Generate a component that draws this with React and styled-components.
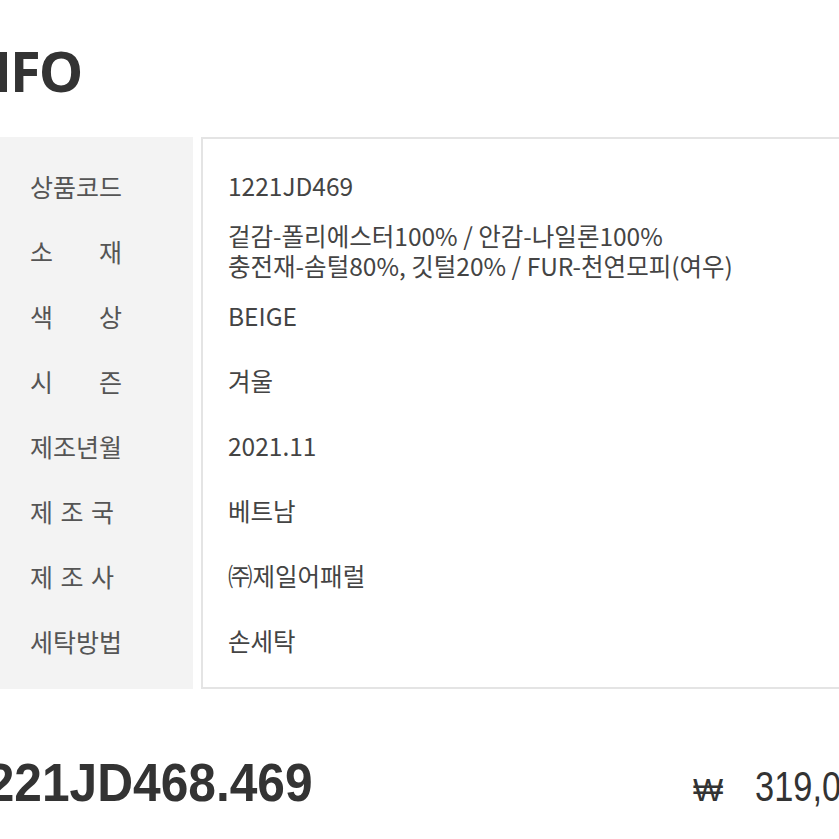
import styled, { createGlobalStyle } from 'styled-components';

const GlobalStyle = createGlobalStyle`
    html, body {
        margin: 0;
        padding: 0;
        background: #ffffff;
    }
    body {
        font-family: "Noto Sans CJK KR", "Noto Sans", sans-serif;
        color: #444;
    }
`;

const rows = [
    { label: ['상품코드'], value: ['1221JD469'] },
    { label: ['소', '재'], value: ['겉감-폴리에스터100% / 안감-나일론100%', '충전재-솜털80%, 깃털20% / FUR-천연모피(여우)'] },
    { label: ['색', '상'], value: ['BEIGE'] },
    { label: ['시', '즌'], value: ['겨울'] },
    { label: ['제조년월'], value: ['2021.11'] },
    { label: ['제', '조', '국'], value: ['베트남'], narrow: true },
    { label: ['제', '조', '사'], value: ['㈜제일어패럴'], narrow: true },
    { label: ['세탁방법'], value: ['손세탁'] },
];

const App = () => (
    <Page>
        <GlobalStyle />
        <Title>INFO</Title>
        <Table>
            <LabelCol>
                {rows.map((row) => (
                    <Row key={row.label.join('')}>
                        <Label $spread={row.label.length > 1} $narrow={row.narrow}>
                            {row.label.map((ch) => (
                                <span key={ch}>{ch}</span>
                            ))}
                        </Label>
                    </Row>
                ))}
            </LabelCol>
            <ValueCol>
                {rows.map((row) => (
                    <Row key={row.label.join('')}>
                        <Value>
                            {row.value.map((line) => (
                                <div key={line}>{line}</div>
                            ))}
                        </Value>
                    </Row>
                ))}
            </ValueCol>
        </Table>
        <Footer>
            <Code>1221JD468.469</Code>
            <Price>
                <Won>₩</Won>
                <Amount>319,000</Amount>
            </Price>
        </Footer>
    </Page>
);

const Page = styled.div`
    width: 839px;
    height: 839px;
    overflow: hidden;
`;
const Title = styled.h1`
    margin: 0;
    padding-top: 36px;
    margin-left: -50px;
    font-family: "Open Sans", "Liberation Sans", sans-serif;
    font-weight: 700;
    font-size: 56px;
    line-height: 68px;
    color: #333;
    letter-spacing: -2px;
`;
const Table = styled.div`
    display: flex;
    column-gap: 8px;
    margin-top: 33px;
    height: 552px;
`;
const LabelCol = styled.div`
    flex: 0 0 193px;
    box-sizing: border-box;
    background: #f3f3f3;
    padding: 16px 0 16px 30px;
`;
const ValueCol = styled.div`
    flex: 1;
    margin-right: -20px;
    box-sizing: border-box;
    border: 2px solid #e4e4e4;
    padding: 14px 0 14px 25px;
`;
const Row = styled.div`
    height: 65px;
    display: flex;
    align-items: center;
`;
const Label = styled.div`
    display: flex;
    justify-content: ${({ $spread }) => ($spread ? 'space-between' : 'flex-start')};
    width: ${({ $narrow }) => ($narrow ? '84px' : '92px')};
    font-size: 25px;
    line-height: 30px;
    color: #555;
    white-space: nowrap;
`;
const Value = styled.div`
    font-size: 24.5px;
    line-height: 30px;
    color: #444;
    white-space: nowrap;
`;
const Footer = styled.div`
    display: flex;
    align-items: baseline;
    justify-content: space-between;
    margin-top: 62px;
`;
const Code = styled.div`
    margin-left: -41px;
    font-family: "Liberation Sans", "Helvetica", sans-serif;
    font-weight: 700;
    font-size: 54px;
    line-height: 62px;
    color: #333;
    white-space: nowrap;
    transform: scaleX(0.92);
    transform-origin: left center;
`;
const Price = styled.div`
    flex: 0 0 146px;
    min-width: 0;
    display: flex;
    align-items: baseline;
    font-family: "Liberation Sans", "Helvetica", sans-serif;
    color: #333;
    white-space: nowrap;
`;
const Won = styled.span`
    flex: 0 0 62px;
    font-size: 32px;
`;
const Amount = styled.span`
    display: inline-block;
    font-size: 43px;
    transform: scaleX(0.8);
    transform-origin: left center;
`;

export default App;
